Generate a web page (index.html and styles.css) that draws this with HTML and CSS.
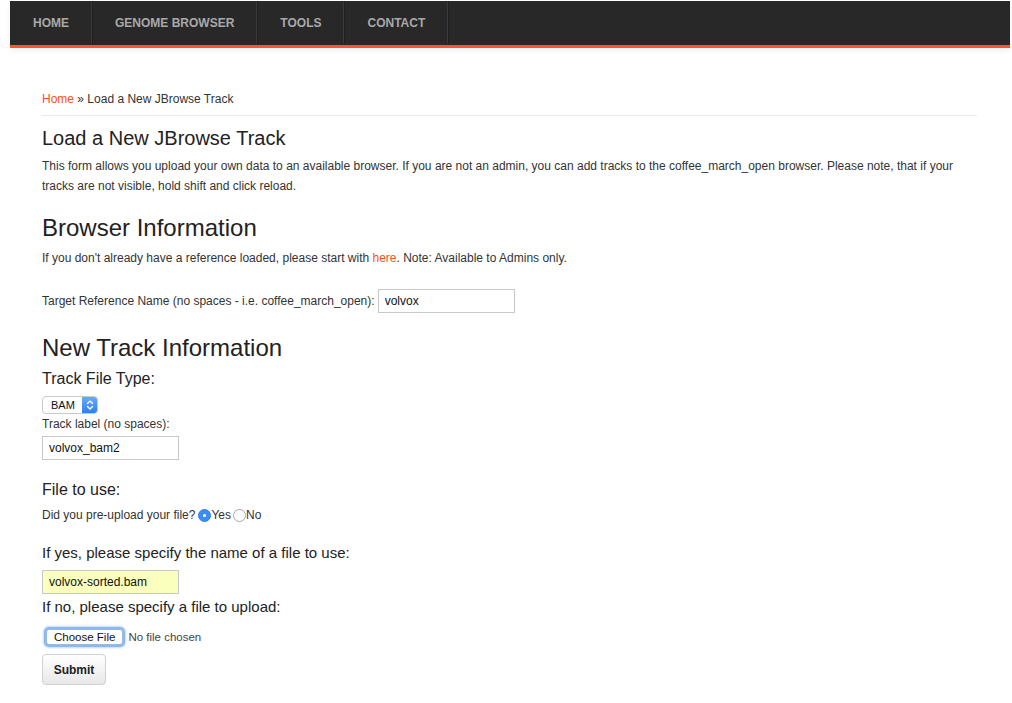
FILE: index.html
```html
<!DOCTYPE html>
<html>
<head>
<meta charset="utf-8">
<title>Load a New JBrowse Track</title>
<link rel="stylesheet" href="styles.css">
</head>
<body>
<nav class="nav">
  <a class="nav-item" href="#">HOME</a>
  <a class="nav-item" href="#">GENOME BROWSER</a>
  <a class="nav-item" href="#">TOOLS</a>
  <a class="nav-item" href="#">CONTACT</a>
</nav>
<main class="content">
  <div class="breadcrumb"><a class="link" href="#">Home</a> » Load a New JBrowse Track</div>
  <hr class="rule">
  <h2 class="title">Load a New JBrowse Track</h2>
  <p class="intro">This form allows you upload your own data to an available browser. If you are not an admin, you can add tracks to the coffee_march_open browser. Please note, that if your tracks are not visible, hold shift and click reload.</p>
  <h1 class="section section-browser">Browser Information</h1>
  <p class="note">If you don't already have a reference loaded, please start with <a class="link" href="#">here</a>. Note: Available to Admins only.</p>
  <div class="ref-row">
    <span class="label">Target Reference Name (no spaces - i.e. coffee_march_open):</span>
    <input class="text-input ref-input" type="text" value="volvox">
  </div>
  <h1 class="section section-track">New Track Information</h1>
  <h3 class="sub sub-type">Track File Type:</h3>
  <div class="select">
    <span class="select-value">BAM</span>
    <span class="select-arrow">
      <svg width="8" height="12" viewBox="0 0 8 12"><path d="M1.5 4.5 L4 2 L6.5 4.5 M1.5 7.5 L4 10 L6.5 7.5" fill="none" stroke="#fff" stroke-width="1.4" stroke-linecap="round" stroke-linejoin="round"/></svg>
    </span>
  </div>
  <div class="small-label">Track label (no spaces):</div>
  <input class="text-input label-input" type="text" value="volvox_bam2">
  <h3 class="sub sub-file">File to use:</h3>
  <div class="radio-row">
    <span>Did you pre-upload your file?</span>
    <span class="radio radio-on"></span><span>Yes</span>
    <span class="radio radio-off"></span><span>No</span>
  </div>
  <h3 class="sub sub-small sub-yes">If yes, please specify the name of a file to use:</h3>
  <input class="text-input file-input" type="text" value="volvox-sorted.bam">
  <h3 class="sub sub-small sub-no">If no, please specify a file to upload:</h3>
  <div class="file-row">
    <span class="choose-btn">Choose File</span>
    <span class="file-status">No file chosen</span>
  </div>
  <button class="submit" type="button">Submit</button>
</main>
</body>
</html>
```
FILE: styles.css
```css
html, body {
  margin: 0;
  padding: 0;
  background: #fff;
}
body {
  font-family: "Liberation Sans", Arial, sans-serif;
  color: #333;
  font-size: 12px;
}
.nav {
  margin: 1px 2px 0 10px;
  height: 44px;
  background: #282828;
  border-bottom: 3px solid #ff5722;
  display: flex;
  align-items: stretch;
  box-shadow: 0 3px 6px rgba(0,0,0,0.06);
}
.nav-item {
  display: flex;
  align-items: center;
  padding: 2px 22px 0 23px;
  margin: 0 0 2px 0;
  color: #a9a9a9;
  font-weight: bold;
  font-size: 12px;
  text-decoration: none;
  border-right: 1px solid #3a3a3a;
  box-shadow: 1px 0 0 #1e1e1e;
}
.content {
  padding: 0 35px 0 42px;
}
.breadcrumb {
  margin-top: 41px;
  line-height: 20px;
  font-size: 12px;
}
.link {
  color: #f4511e;
  text-decoration: none;
}
.rule {
  margin: 6px 0 0 0;
  border: 0;
  border-top: 1px solid #eaeaea;
  height: 0;
}
.title {
  margin: 11px 0 0 0;
  font-size: 20px;
  line-height: 22px;
  font-weight: normal;
  color: #222;
}
.intro {
  margin: 7px 0 0 0;
  line-height: 20px;
  font-size: 12px;
}
.section {
  font-size: 24px;
  line-height: 26px;
  font-weight: normal;
  color: #222;
  margin: 0;
}
.section-browser { margin-top: 19px; }
.section-track { margin-top: 22px; }
.note {
  margin: 7px 0 0 0;
  line-height: 20px;
}
.ref-row {
  margin-top: 21px;
  display: flex;
  align-items: center;
  gap: 3px;
}
.text-input {
  display: block;
  box-sizing: border-box;
  height: 24px;
  border: 1px solid #c8c8c8;
  padding: 0 0 0 6px;
  font-family: "Liberation Sans", Arial, sans-serif;
  font-size: 12px;
  color: #111;
  background: #fff;
  outline: none;
}
.ref-input { width: 137px; }
.label-input { width: 137px; margin-top: 4px; }
.file-input { width: 137px; margin-top: 8px; background: #faffbd; }
.sub {
  font-size: 16px;
  line-height: 18px;
  font-weight: normal;
  color: #222;
  margin: 0;
}
.sub-small { font-size: 15px; }
.sub-type { margin-top: 9px; }
.sub-file { margin-top: 21px; }
.sub-yes { margin-top: 20px; }
.sub-no { margin-top: 4px; }
.select {
  margin-top: 8px;
  display: flex;
  width: 56px;
  height: 18px;
  box-sizing: border-box;
  border: 1px solid #c9c9c9;
  border-radius: 4px;
  overflow: hidden;
  background: #fff;
}
.select-value {
  flex: 1;
  display: flex;
  align-items: center;
  padding-left: 8px;
  font-size: 11px;
  color: #111;
}
.select-arrow {
  width: 15px;
  display: flex;
  align-items: center;
  justify-content: center;
  background: linear-gradient(#6aa9f8, #2f7ef0);
}
.small-label {
  margin-top: 2px;
  line-height: 16px;
}
.radio-row {
  margin-top: 7px;
  line-height: 18px;
  display: flex;
  align-items: center;
}
.radio {
  display: inline-block;
  box-sizing: border-box;
  width: 13px;
  height: 13px;
  border-radius: 50%;
}
.radio-on {
  margin-left: 3px;
  background: #3b8ef3;
  border: 1px solid #2f7ee8;
  position: relative;
}
.radio-on::after {
  content: "";
  position: absolute;
  left: 4px;
  top: 4px;
  width: 3px;
  height: 3px;
  border-radius: 50%;
  background: #fff;
}
.radio-off {
  margin-left: 2px;
  border: 1px solid #a9a9a9;
  background: #fff;
}
.file-row {
  margin-top: 13px;
  display: flex;
  align-items: center;
  gap: 5px;
  margin-left: 4px;
}
.choose-btn {
  display: inline-block;
  box-sizing: border-box;
  height: 16px;
  line-height: 14px;
  padding: 0 7px;
  border: 1px solid #9bb9e0;
  border-radius: 3px;
  background: #fff;
  color: #111;
  font-size: 11.5px;
  box-shadow: 0 0 0 2px #8bb8f0, 0 0 2px 3px rgba(139,184,240,0.5);
}
.file-status {
  font-size: 11.5px;
  color: #444;
}
.submit {
  display: block;
  margin-top: 9px;
  width: 64px;
  height: 31px;
  border: 1px solid #d0d0d0;
  border-radius: 4px;
  background: linear-gradient(#ffffff, #e8e8e8);
  font-family: "Liberation Sans", Arial, sans-serif;
  font-weight: bold;
  font-size: 12px;
  color: #222;
  padding: 0;
}
```
